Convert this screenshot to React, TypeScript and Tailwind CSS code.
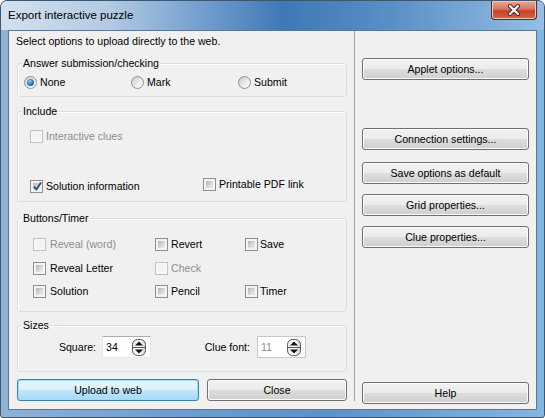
import React from 'react';

function Check({ checked = false, disabled = false }: { checked?: boolean; disabled?: boolean }) {
  return (
    <div
      className={`relative w-[13px] h-[13px] shrink-0 border p-[2px] ${
        disabled ? 'border-[#c2c2c2] bg-[#f7f7f7]' : 'border-[#8e8f8f] bg-[#f4f4f4]'
      }`}
    >
      <div
        className={`w-full h-full ${
          disabled
            ? 'bg-[#f2f2f2]'
            : 'bg-[linear-gradient(135deg,#aeb2b8_0%,#d4d6d9_50%,#f0f0f0_100%)]'
        }`}
      />
      {checked && (
        <svg className="absolute left-[1px] top-[0px]" width="11" height="11" viewBox="0 0 11 11">
          <path d="M2 5.5 L4.3 8.5 L9 1.5" fill="none" stroke="#314a8a" strokeWidth="2" strokeLinejoin="round" />
        </svg>
      )}
    </div>
  );
}

function CheckItem({
  label,
  checked,
  disabled,
  gap = 'gap-[3px]',
  className = '',
}: {
  label: string;
  checked?: boolean;
  disabled?: boolean;
  gap?: string;
  className?: string;
}) {
  return (
    <div className={`flex items-center h-[16px] ${gap} ${className}`}>
      <Check checked={checked} disabled={disabled} />
      <span className={disabled ? 'text-[#8d8d8d]' : 'text-black'}>{label}</span>
    </div>
  );
}

function Radio({ label, selected = false }: { label: string; selected?: boolean }) {
  return (
    <div className="flex items-center gap-[3px] h-[16px] w-[107px]">
      <div className="w-[13px] h-[13px] shrink-0 rounded-full border border-[#8e8f8f] bg-[linear-gradient(135deg,#c9cbcf_0%,#f2f2f2_70%,#ffffff_100%)] flex items-center justify-center">
        {selected && (
          <div className="w-[7px] h-[7px] rounded-full bg-[radial-gradient(circle_at_40%_35%,#9fd6f7_0%,#2f7fbf_45%,#1d4f7e_100%)]" />
        )}
      </div>
      <span>{label}</span>
    </div>
  );
}

function WinButton({
  children,
  className = '',
  focused = false,
}: {
  children: React.ReactNode;
  className?: string;
  focused?: boolean;
}) {
  return (
    <div
      className={`h-[22px] rounded-[3px] border flex items-center justify-center text-black ${
        focused
          ? 'border-[#3c7fb1] bg-[linear-gradient(180deg,#eaf6fd_0%,#d9f0fc_50%,#bee6fd_51%,#a7d9f5_100%)] shadow-[inset_0_0_0_1px_#9be0fb]'
          : 'border-[#707070] bg-[linear-gradient(180deg,#f2f2f2_0%,#ebebeb_50%,#dddddd_51%,#cfcfcf_100%)] shadow-[inset_0_0_0_1px_#fbfbfb]'
      } ${className}`}
    >
      {children}
    </div>
  );
}

function Group({
  title,
  className = '',
  children,
}: {
  title: string;
  className?: string;
  children?: React.ReactNode;
}) {
  return (
    <div
      className={`ml-[8px] w-[330px] border border-[#d5dfe5] rounded-[3px] shadow-[inset_1px_1px_0_#ffffff] ${className}`}
    >
      <div className="-mt-[8px] ml-[4px] w-fit px-[1px] leading-[15px] bg-[#f0f0f0]">{title}</div>
      {children}
    </div>
  );
}

function Spinner() {
  return (
    <svg width="14" height="17" viewBox="0 0 14 17">
      <defs>
        <linearGradient id="sp" x1="0" y1="0" x2="1" y2="0">
          <stop offset="0" stopColor="#e8e8e8" />
          <stop offset="0.5" stopColor="#ffffff" />
          <stop offset="1" stopColor="#d0d0d0" />
        </linearGradient>
      </defs>
      <rect x="0.5" y="0.5" width="13" height="16" rx="5" fill="url(#sp)" stroke="#5a5a5a" />
      <line x1="1" y1="8.5" x2="13" y2="8.5" stroke="#5a5a5a" />
      <path d="M3 6.5 L7 2.5 L11 6.5 Z" fill="#111" />
      <path d="M3 10.5 L7 14.5 L11 10.5 Z" fill="#111" />
    </svg>
  );
}

function SpinInput({ value, disabled = false }: { value: string; disabled?: boolean }) {
  return (
    <div
      className={`w-[49px] h-[22px] bg-white border flex items-center justify-between pl-[3px] pr-[4px] ${
        disabled ? 'border-[#c8c8c8] text-[#8d8d8d]' : 'border-[#e3e9ef] border-t-[#abadb3] text-black'
      }`}
    >
      <span>{value}</span>
      <Spinner />
    </div>
  );
}

export default function App() {
  return (
    <div className="w-[545px] h-[418px] flex flex-col border border-[#3f5670] rounded-t-[7px] rounded-b-[3px] bg-[linear-gradient(90deg,#8fb2d8_0%,#6f9fd0_30%,#5a92ca_60%,#84b6e2_100%)] font-['Liberation_Sans',Arial,sans-serif] text-[10.6px] leading-[15px] text-black overflow-hidden">
      <div className="h-[29px] flex justify-between pl-[7px] pr-[7px] shrink-0 bg-[linear-gradient(90deg,#d3e1ef_0%,#b2cae3_20%,#6f9ccc_38%,#3f78b6_52%,#5a8fc6_72%,#95bfe4_100%)]">
        <div className="self-center text-[11.5px] text-black">Export interactive puzzle</div>
        <div className="self-start w-[46px] h-[19px] rounded-b-[4px] border border-t-0 border-[#5b2a23] bg-[linear-gradient(180deg,#e9a996_0%,#d87560_45%,#c2412a_55%,#d4694a_100%)] shadow-[inset_0_0_0_1px_#f2c3b6] flex items-center justify-center">
          <svg width="14" height="12" viewBox="0 0 14 12">
            <path d="M3 2 L11 10 M11 2 L3 10" stroke="#4a1f18" strokeWidth="4" strokeLinecap="round" />
            <path d="M3 2 L11 10 M11 2 L3 10" stroke="#ffffff" strokeWidth="2.2" strokeLinecap="round" />
          </svg>
        </div>
      </div>

      <div className="mx-[7px] h-[380px] shrink-0 bg-[#f0f0f0] border border-[#5d7696] flex">
        <div className="w-[345px] flex flex-col">
          <div className="pt-[3px] pl-[7px]">Select options to upload directly to the web.</div>

          <Group title="Answer submission/checking" className="mt-[14px] h-[34px]">
            <div className="mt-[3px] pl-[6px] flex">
              <Radio label="None" selected />
              <Radio label="Mark" />
              <Radio label="Submit" />
            </div>
          </Group>

          <Group title="Include" className="mt-[14px] h-[91px]">
            <div className="pl-[12px]">
              <CheckItem label="Interactive clues" disabled className="mt-[9px]" />
              <div className="mt-[32px] flex items-start">
                <CheckItem label="Solution information" checked className="mt-[2px] w-[173px]" />
                <CheckItem label="Printable PDF link" />
              </div>
            </div>
          </Group>

          <Group title="Buttons/Timer" className="mt-[16px] h-[94px]">
            <div className="pl-[15px]">
              <div className="mt-[10px] flex">
                <CheckItem label="Reveal (word)" disabled gap="gap-[4px]" className="w-[122px]" />
                <CheckItem label="Revert" gap="gap-[3px]" className="w-[90px]" />
                <CheckItem label="Save" gap="gap-[2px]" />
              </div>
              <div className="mt-[8px] flex">
                <CheckItem label="Reveal Letter" gap="gap-[4px]" className="w-[122px]" />
                <CheckItem label="Check" disabled gap="gap-[3px]" className="w-[90px]" />
              </div>
              <div className="mt-[7px] flex">
                <CheckItem label="Solution" gap="gap-[4px]" className="w-[122px]" />
                <CheckItem label="Pencil" gap="gap-[3px]" className="w-[90px]" />
                <CheckItem label="Timer" gap="gap-[2px]" />
              </div>
            </div>
          </Group>

          <Group title="Sizes" className="mt-[13px] h-[47px]">
            <div className="mt-[3px] flex items-center">
              <div className="w-[78px] text-right">Square:</div>
              <div className="ml-[6px]">
                <SpinInput value="34" />
              </div>
              <div className="w-[99px] text-right">Clue font:</div>
              <div className="ml-[7px]">
                <SpinInput value="11" disabled />
              </div>
            </div>
          </Group>

          <div className="mt-[7px] ml-[8px] flex gap-[8px]">
            <WinButton focused className="w-[182px]">
              Upload to web
            </WinButton>
            <WinButton className="w-[140px]">Close</WinButton>
          </div>
        </div>

        <div className="w-px bg-[#a0a0a0] mb-[8px]" />

        <div className="flex-1 flex flex-col pl-[7px]">
          <WinButton className="mt-[27px] w-[167px]">Applet options...</WinButton>
          <WinButton className="mt-[48px] w-[167px]">Connection settings...</WinButton>
          <WinButton className="mt-[12px] w-[167px]">Save options as default</WinButton>
          <WinButton className="mt-[10px] w-[167px]">Grid properties...</WinButton>
          <WinButton className="mt-[10px] w-[167px]">Clue properties...</WinButton>
          <WinButton className="mt-auto mb-[5px] w-[167px]">Help</WinButton>
        </div>
      </div>
    </div>
  );
}
